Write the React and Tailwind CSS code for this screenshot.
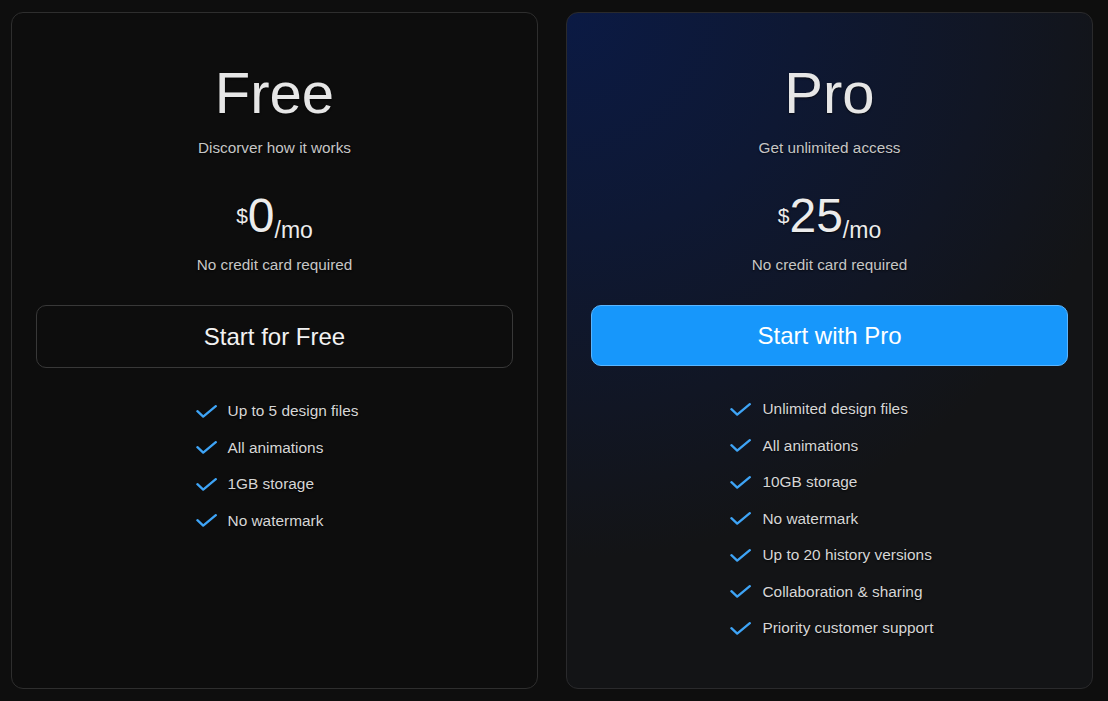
import { Fragment } from 'react';

// Two-tier pricing cards on a near-black page.

const plans = [
  {
    name: 'Free',
    tagline: 'Discorver how it works',
    price: '0',
    cta: 'Start for Free',
    featured: false,
    features: ['Up to 5 design files', 'All animations', '1GB storage', 'No watermark'],
  },
  {
    name: 'Pro',
    tagline: 'Get unlimited access',
    price: '25',
    cta: 'Start with Pro',
    featured: true,
    features: [
      'Unlimited design files',
      'All animations',
      '10GB storage',
      'No watermark',
      'Up to 20 history versions',
      'Collaboration & sharing',
      'Priority customer support',
    ],
  },
];

function CheckMark() {
  return (
    <svg width="21" height="13" viewBox="0 0 21 13" fill="none" className="shrink-0">
      <path d="M1.4 6.2 7.2 11.6 19.8 1.2" stroke="#3ea4f6" strokeWidth="2.3" strokeLinecap="round" strokeLinejoin="round" />
    </svg>
  );
}

function PlanCard({ plan }) {
  const shadow = '[text-shadow:0_1px_2px_rgba(0,0,0,0.7)]';
  return (
    <div
      className={
        plan.featured
          ? 'flex-1 h-[677px] rounded-[12px] border border-[#2a2a2c] bg-[radial-gradient(130%_95%_at_0%_0%,#0b1a44_0%,#0e1833_35%,#111624_62%,#131416_85%)] flex flex-col items-center pt-[51px] px-[24px]'
          : 'flex-1 h-[677px] rounded-[12px] border border-[#2e2e2e] bg-[#0d0d0d] flex flex-col items-center pt-[51px] px-[24px]'
      }
    >
      <h2 className={`text-[58px] leading-none text-[#e6e6e6] ${shadow}`}>{plan.name}</h2>
      <p className={`mt-[16px] text-[15.3px] leading-[20px] text-[#c6c6c6] ${shadow}`}>{plan.tagline}</p>

      <div className={`mt-[34px] flex items-baseline leading-none text-[#ececec] ${shadow}`}>
        <span className="relative -top-[9px] text-[21px]">$</span>
        <span className="text-[48px]">{plan.price}</span>
        <span className="relative top-[6px] text-[23px]">/mo</span>
      </div>
      <p className={`mt-[15px] text-[15.3px] leading-[20px] text-[#c6c6c6] ${shadow}`}>No credit card required</p>

      <button
        className={
          plan.featured
            ? 'mt-[30px] w-full h-[61px] rounded-[10px] border border-[#5ab6ff] bg-[#1797fb] text-white text-[24px]'
            : 'mt-[30px] w-full h-[63px] rounded-[10px] border border-[#383838] bg-transparent text-[#f2f2f2] text-[24px]'
        }
      >
        {plan.cta}
      </button>

      <ul className="mt-[33px] ml-[5px] flex flex-col gap-[16.5px]">
        {plan.features.map((f) => (
          <Fragment key={f}>
            <li className={`flex items-center gap-[11px] text-[15.4px] leading-[20px] text-[#d6d6d6] ${shadow}`}>
              <CheckMark />
              <span>{f}</span>
            </li>
          </Fragment>
        ))}
      </ul>
    </div>
  );
}

export default function App() {
  return (
    <div className="w-full h-[701px] bg-[#0e0e0e] pl-[11px] pr-[15px] pt-[12px] flex gap-[28px] font-['Liberation_Sans',Arial,sans-serif]">
      {plans.map((p) => (
        <PlanCard key={p.name} plan={p} />
      ))}
    </div>
  );
}
